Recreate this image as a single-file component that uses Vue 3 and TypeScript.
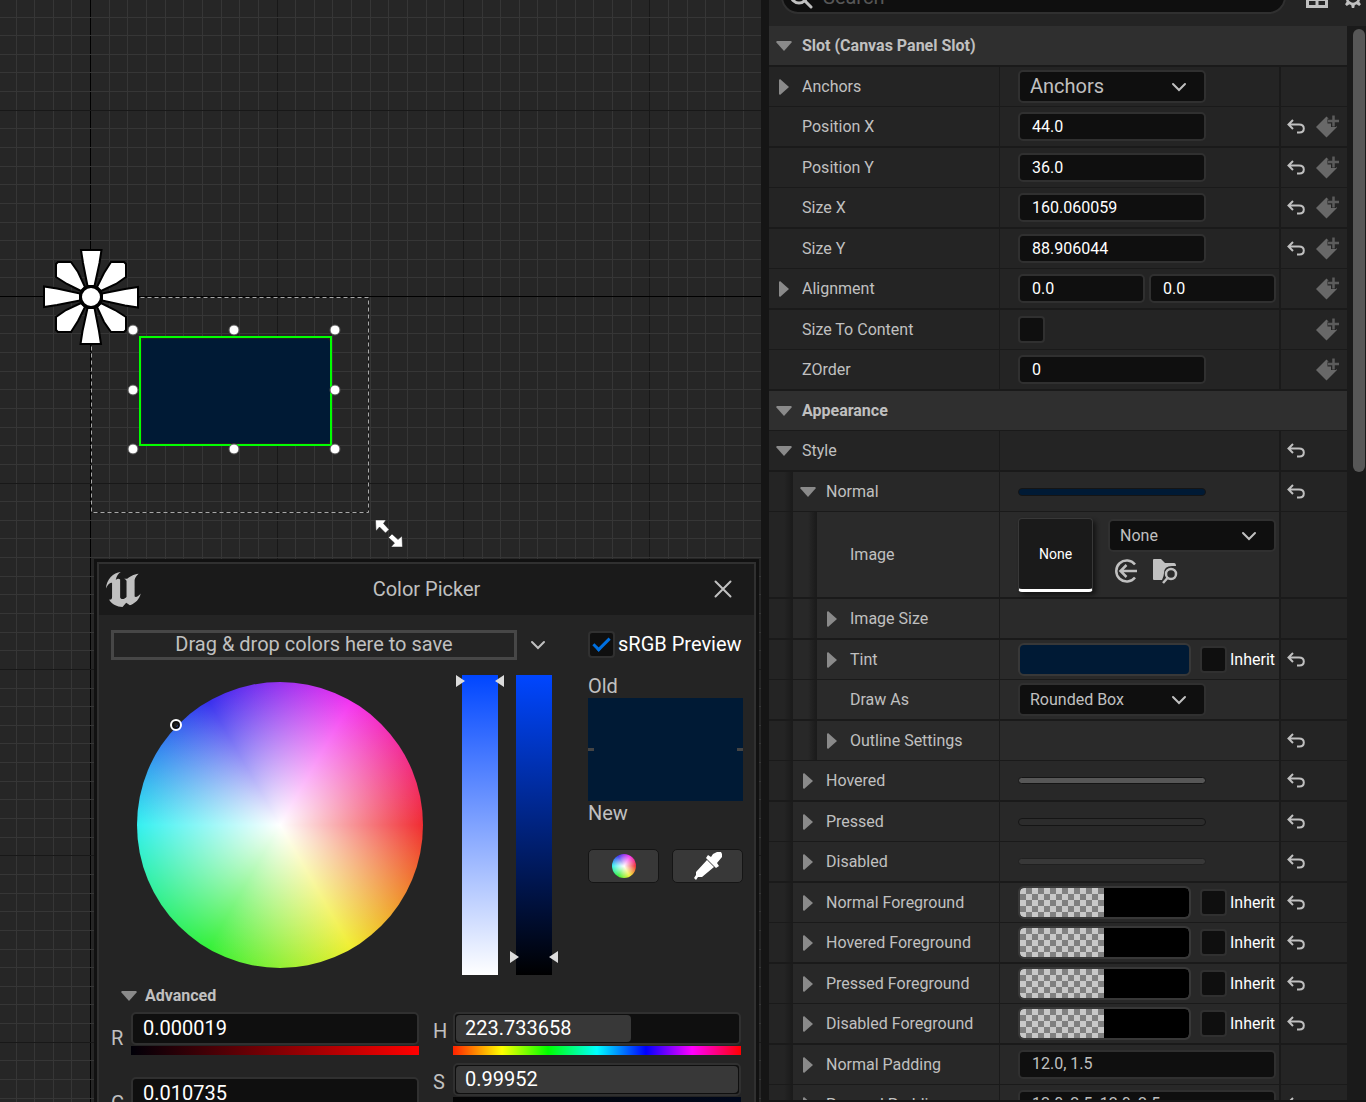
<script setup lang="ts">
import { ref } from 'vue'

type Kind = 'header' | 'none' | 'number' | 'pair' | 'toggle' | 'select' | 'bigselect' | 'brush' | 'image' | 'color' | 'text'

interface Row {
  label: string
  kind: Kind
  level?: number
  arrow?: 'open' | 'closed'
  values?: string[]
  tone?: string
  undo?: boolean
  bind?: boolean
}

const rows: Row[] = [
  { label: 'Slot (Canvas Panel Slot)', kind: 'header', arrow: 'open' },
  { label: 'Anchors', kind: 'bigselect', arrow: 'closed', values: ['Anchors'] },
  { label: 'Position X', kind: 'number', values: ['44.0'], undo: true, bind: true },
  { label: 'Position Y', kind: 'number', values: ['36.0'], undo: true, bind: true },
  { label: 'Size X', kind: 'number', values: ['160.060059'], undo: true, bind: true },
  { label: 'Size Y', kind: 'number', values: ['88.906044'], undo: true, bind: true },
  { label: 'Alignment', kind: 'pair', arrow: 'closed', values: ['0.0', '0.0'], bind: true },
  { label: 'Size To Content', kind: 'toggle', bind: true },
  { label: 'ZOrder', kind: 'number', values: ['0'], bind: true },
  { label: 'Appearance', kind: 'header', arrow: 'open' },
  { label: 'Style', kind: 'none', arrow: 'open', undo: true },
  { label: 'Normal', kind: 'brush', level: 1, arrow: 'open', tone: 'navy', undo: true },
  { label: 'Image', kind: 'image', level: 2, values: ['None'] },
  { label: 'Image Size', kind: 'none', level: 2, arrow: 'closed' },
  { label: 'Tint', kind: 'color', level: 2, arrow: 'closed', tone: 'navy', undo: true },
  { label: 'Draw As', kind: 'select', level: 2, values: ['Rounded Box'] },
  { label: 'Outline Settings', kind: 'none', level: 2, arrow: 'closed', undo: true },
  { label: 'Hovered', kind: 'brush', level: 1, arrow: 'closed', tone: 'light', undo: true },
  { label: 'Pressed', kind: 'brush', level: 1, arrow: 'closed', tone: 'dark', undo: true },
  { label: 'Disabled', kind: 'brush', level: 1, arrow: 'closed', tone: 'dim', undo: true },
  { label: 'Normal Foreground', kind: 'color', level: 1, arrow: 'closed', tone: 'alpha', undo: true },
  { label: 'Hovered Foreground', kind: 'color', level: 1, arrow: 'closed', tone: 'alpha', undo: true },
  { label: 'Pressed Foreground', kind: 'color', level: 1, arrow: 'closed', tone: 'alpha', undo: true },
  { label: 'Disabled Foreground', kind: 'color', level: 1, arrow: 'closed', tone: 'alpha', undo: true },
  { label: 'Normal Padding', kind: 'text', level: 1, arrow: 'closed', values: ['12.0, 1.5'] },
  { label: 'Pressed Padding', kind: 'text', level: 1, arrow: 'closed', values: ['12.0, 2.5, 12.0, 2.5'], undo: true },
]

// Separators alternate between one and two pixels down the list.
const isThick = (i: number): boolean => i % 2 === (i > 12 ? 1 : 0)

const srgb = ref(true)

// Design surface grid: a heavy line every tenth step, black through the origin.
const STEP = 18.64
const originX = 90
const originY = 296
interface GridLine { pos: number; tone: string }
function gridLines(origin: number, extent: number): GridLine[] {
  const out: GridLine[] = []
  for (let k = -Math.floor(origin / STEP); origin + k * STEP < extent; k++) {
    out.push({
      pos: Math.floor(origin + 0.6 + k * STEP),
      tone: k === 0 ? 'axis' : k % 10 === 0 ? 'major' : 'minor',
    })
  }
  const weight: Record<string, number> = { minor: 0, major: 1, axis: 2 }
  return out.sort((a, b) => weight[a.tone] - weight[b.tone])
}
const columns = gridLines(originX, 2600)
const lines = gridLines(originY, 1800)

const handles: [number, number][] = [
  [133, 330], [234, 330], [335, 330], [133, 390],
  [335, 390], [133, 449], [234, 449], [335, 449],
]

interface Channel { name: string; value: string; bar: string; fill?: number }
const rgb: Channel[] = [
  { name: 'R', value: '0.000019', bar: 'red' },
  { name: 'G', value: '0.010735', bar: 'green' },
]
const hsv: Channel[] = [
  { name: 'H', value: '223.733658', bar: 'hue', fill: 62 },
  { name: 'S', value: '0.99952', bar: 'sat', fill: 100 },
]
</script>

<template>
  <div class="editor">
    <main class="surface">
      <svg class="stage" aria-label="Design surface">
        <rect v-for="l in columns" :key="'c' + l.pos" :x="l.pos" y="0" width="1" height="100%" :class="l.tone" />
        <rect v-for="l in lines" :key="'l' + l.pos" x="0" :y="l.pos" width="100%" height="1" :class="l.tone" />
        <rect x="91.5" y="297.5" width="277" height="215" class="bounds-under" />
        <rect x="91.5" y="297.5" width="277" height="215" class="bounds" />
        <rect x="140" y="337" width="191" height="108" class="sel-bg" />
        <rect x="142" y="339" width="188" height="104" rx="4" fill="#001a35" />
        <rect x="140" y="337" width="191" height="108" class="sel" />
        <circle v-for="(h, i) in handles" :key="i" :cx="h[0]" :cy="h[1]" r="5" class="handle" />
        <g transform="translate(91 297)" class="flower">
          <g v-for="a in [0, 90, 180, 270]" :key="a" :transform="`rotate(${a})`">
            <path d="M-10 -47H10.500L8.500 -34L3.500 -11H-3.500L-8 -34Z" />
            <path d="M20 -35H33L35 -33V-20L25 -13L10 -6L6 -10L13 -24Z" />
          </g>
          <circle r="10.500" class="hub" />
        </g>
        <g fill="#fff" stroke="#222" stroke-width="0.500">
          <path d="M375.500 520H386L383.500 523.500L389 529.500L385.500 533L379.500 527L376 531Z" />
          <path d="M402.500 547H391L394.500 543L388.500 537.500L392 534L398 539.500L402 536Z" />
        </g>
      </svg>

      <section class="picker" aria-label="Color Picker">
        <header class="titlebar">
          <svg class="logo" viewBox="48 64 104 104" aria-hidden="true">
            <path fill="#c0c0c0" d="M92 64C70 66 49 86 48 113C54 99 62 93 66 97V138C66 145 62 147 57 146C65 160 81 168 97 168L108 155L119 163C136 157 148 144 151 128C144 136 138 140 133 137V88C134 80 140 74 145 69C130 70 118 78 111 84H102C108 87 110 89 109 95V138C104 145 91 147 90 139V86C86 83 81 84 77 88C79 76 85 68 92 64Z" />
          </svg>
          <h1>Color Picker</h1>
          <button class="plain close" aria-label="Close">
            <svg width="18" height="18" viewBox="0 0 18 18"><path d="M1.500 1.500L16.500 16.500M16.500 1.500L1.500 16.500" class="stroke" /></svg>
          </button>
        </header>

        <div class="body">
          <div class="mixer">
            <div class="mix-left">
              <div class="save-row">
                <div class="dropzone">Drag &amp; drop colors here to save</div>
                <button class="plain themes" aria-label="Color themes">
                  <svg width="16" height="10" viewBox="0 0 16 10"><path d="M2 2L8 8L14 2" class="stroke" /></svg>
                </button>
              </div>
              <div class="wheel-row">
                <div class="wheel-box">
                  <div class="wheel">
                    <span class="marker"></span>
                  </div>
                </div>
                <div class="slider">
                  <input type="range" min="0" max="100" value="100" class="ramp ramp-sat" aria-label="Saturation">
                  <svg class="marks top" width="50" height="14" viewBox="0 0 50 14"><path d="M1 1L10 7L1 13ZM49 1L40 7L49 13Z" /></svg>
                </div>
                <div class="slider">
                  <input type="range" min="0" max="100" value="6" class="ramp ramp-val" aria-label="Value">
                  <svg class="marks low" width="50" height="14" viewBox="0 0 50 14"><path d="M1 1L10 7L1 13ZM49 1L40 7L49 13Z" /></svg>
                </div>
              </div>
            </div>
            <div class="mix-right">
              <label class="srgb"><input v-model="srgb" type="checkbox" class="check"><span>sRGB Preview</span></label>
              <div class="cap old">Old</div>
              <div class="compare"><i></i><i></i></div>
              <div class="cap">New</div>
              <div class="tools">
                <button aria-label="Color wheel"><span class="mini-wheel"></span></button>
                <button aria-label="Eyedropper">
                  <svg width="30" height="28" viewBox="0 0 30 28">
                    <path fill="#fff" d="M20 2L24 0H28L29 2V5L24 11L26 14L23 16L13 6L15 3L18 5Z" />
                    <path fill="#fff" d="M14 8L21 15L9 25L5 25L3 28L1 26L3 23V20Z" />
                  </svg>
                </button>
              </div>
            </div>
          </div>

          <button class="plain advanced"><svg width="16" height="10" viewBox="0 0 16 10"><path d="M1 0H15L16 1L8 10L0 1Z" fill="#8a8a8a" /></svg>Advanced</button>

          <div class="channels">
            <div class="channel-col wide">
              <label v-for="c in rgb" :key="c.name" class="channel">
                <span class="ch-name">{{ c.name }}</span>
                <span class="ch-body">
                  <span class="ch-field"><input type="text" :value="c.value"></span>
                  <span class="bar" :class="c.bar"></span>
                </span>
              </label>
            </div>
            <div class="channel-col">
              <label v-for="c in hsv" :key="c.name" class="channel">
                <span class="ch-name">{{ c.name }}</span>
                <span class="ch-body">
                  <span class="ch-field"><span class="fill-track"><span class="fill" :style="{ width: c.fill + '%' }"></span></span><input type="text" :value="c.value"></span>
                  <span class="bar" :class="c.bar"></span>
                </span>
              </label>
            </div>
          </div>
        </div>
      </section>
    </main>

    <aside class="details">
      <div class="toolbar">
        <div class="search">
          <svg width="24" height="24" viewBox="0 0 24 24"><circle cx="10" cy="10" r="8" class="stroke thick-stroke" /><path d="M16 16L22 22" class="stroke thick-stroke" /></svg>
          <input type="text" placeholder="Search" aria-label="Search">
        </div>
        <button class="plain" aria-label="Property matrix">
          <svg width="22" height="20" viewBox="0 0 22 20"><path fill="#c0c0c0" fill-rule="evenodd" d="M0 1H22V20H0ZM3 4V9H9.500V4ZM12.500 4V9H19V4ZM3 13V17H9.500V13ZM12.500 13V17H19V13Z" /></svg>
        </button>
        <button class="plain gear" aria-label="Settings">
          <svg width="20" height="20" viewBox="-10 -10 20 20">
            <circle r="6" fill="none" stroke="#c0c0c0" stroke-width="2.500" />
            <circle r="2" fill="#c0c0c0" />
            <path v-for="a in [0, 45, 90, 135, 180, 225, 270, 315]" :key="a" d="M-2 -6L-1.200 -10H1.200L2 -6Z" fill="#c0c0c0" :transform="`rotate(${a})`" />
          </svg>
        </button>
      </div>

      <div class="scroll-area">
        <div class="grid">
          <div
            v-for="(r, i) in rows"
            :key="r.label"
            class="row"
            :class="['lv' + (r.level ?? 0), r.kind, { thick: isThick(i) }]"
          >
            <div class="name">
              <span v-for="n in r.level ?? 0" :key="n" class="well" :class="'well' + n"></span>
              <span class="twirl">
                <svg v-if="r.arrow === 'open'" width="16" height="10" viewBox="0 0 16 10"><path d="M1 0H15L16 1L8 10L0 1Z" fill="#8a8a8a" /></svg>
                <svg v-else-if="r.arrow === 'closed'" width="10" height="16" viewBox="0 0 10 16"><path d="M0 1L1 0L10 8L1 16L0 15Z" fill="#8a8a8a" /></svg>
              </span>
              <span class="label">{{ r.label }}</span>
            </div>

            <template v-if="r.kind !== 'header'">
              <div class="value">
                <template v-if="r.kind === 'number' || r.kind === 'pair' || r.kind === 'text'">
                  <input v-for="(v, k) in r.values" :key="k" type="text" class="field" :value="v" :aria-label="r.label">
                </template>

                <span v-else-if="r.kind === 'select' || r.kind === 'bigselect'" class="combo">
                  <select :aria-label="r.label"><option>{{ r.values?.[0] }}</option></select>
                  <svg width="16" height="10" viewBox="0 0 16 10"><path d="M2 2L8 8L14 2" class="stroke" /></svg>
                </span>

                <input v-else-if="r.kind === 'toggle'" type="checkbox" class="check" :aria-label="r.label">

                <span v-else-if="r.kind === 'brush'" class="brush-bar" :class="r.tone"></span>

                <template v-else-if="r.kind === 'color'">
                  <button class="swatch" :class="r.tone" :aria-label="r.label"></button>
                  <label class="inherit"><input type="checkbox" class="check"><span>Inherit</span></label>
                </template>

                <template v-else-if="r.kind === 'image'">
                  <div class="thumb">None</div>
                  <div class="asset">
                    <span class="combo">
                      <select aria-label="Image asset"><option>None</option></select>
                      <svg width="16" height="10" viewBox="0 0 16 10"><path d="M2 2L8 8L14 2" class="stroke" /></svg>
                    </span>
                    <div class="asset-tools">
                      <button class="plain" aria-label="Use selected asset">
                        <svg width="24" height="24" viewBox="0 0 24 24"><path d="M21 5.500A10.500 10.500 0 1 0 21 18.500M23 12H7M12.500 6L6.500 12L12.500 18" fill="none" stroke="#c0c0c0" stroke-width="2.500" /></svg>
                      </button>
                      <button class="plain" aria-label="Browse to asset">
                        <svg width="26" height="26" viewBox="0 0 26 26">
                          <path fill="#c0c0c0" d="M1 2Q1 1 2 1H9L13 5H22Q24 5 24 8H20Q12 8 12 15Q12 18 10 22H2Q1 22 1 21Z" />
                          <circle cx="19" cy="16" r="5" fill="none" stroke="#c0c0c0" stroke-width="2.500" />
                          <path d="M15.500 20L11 25" stroke="#c0c0c0" stroke-width="2.500" />
                        </svg>
                      </button>
                    </div>
                  </div>
                </template>
              </div>

              <div class="actions">
                <button v-if="r.undo" class="plain undo" :aria-label="'Reset ' + r.label">
                  <svg width="18" height="15" viewBox="0 0 18 15"><path d="M6 1L1.500 5.500L6 10M1.500 5.500H12C15.500 5.500 16.800 7.500 16.800 9.500C16.800 12 15 13.500 12.500 13.500H10" fill="none" stroke="#c0c0c0" stroke-width="2" /></svg>
                </button>
                <button v-if="r.bind" class="plain bind" :aria-label="'Keyframe ' + r.label">
                  <svg width="23" height="23" viewBox="0 0 23 23">
                    <path d="M0 12L10.500 1.500L21 12L10.500 22.500Z" fill="#686868" />
                    <path d="M17.500 0V12M11.500 6H23" stroke="#242424" stroke-width="5" />
                    <path d="M17.500 0.500V11.500M12 6H23" stroke="#5c5c5c" stroke-width="2.500" />
                  </svg>
                </button>
              </div>
            </template>
          </div>
        </div>
        <div class="scrollbar"><span></span></div>
      </div>
    </aside>
  </div>
</template>

<style>
body {
  margin: 0;
  background: #151515;
}
</style>

<style scoped>
* {
  box-sizing: border-box;
}
.editor {
  display: flex;
  height: 100vh;
  overflow: hidden;
  background: #151515;
  color: #c0c0c0;
  font-family: Roboto, "Liberation Sans", sans-serif;
  font-size: 16px;
  line-height: 20px;
}
input,
select,
button {
  font: inherit;
  color: inherit;
  margin: 0;
}
svg {
  display: block;
}
.plain {
  background: none;
  border: 0;
  padding: 0;
}
.stroke {
  fill: none;
  stroke: #c0c0c0;
  stroke-width: 2;
  stroke-linecap: round;
}
.thick-stroke {
  stroke-width: 3;
}

/* Design surface */
.surface {
  position: relative;
  flex: 1;
  min-width: 0;
  overflow: hidden;
  background: #262626;
}
.stage {
  width: 100%;
  height: 100%;
}
.minor { fill: #363636; }
.major { fill: #181818; }
.axis { fill: #000; }
.bounds-under {
  fill: none;
  stroke: #151515;
}
.bounds {
  fill: none;
  stroke: #a8a8a8;
  stroke-dasharray: 4 3;
}
.sel-bg { fill: #201c28; }
.sel {
  fill: none;
  stroke: #00ff00;
  stroke-width: 2;
}
.handle {
  fill: #fff;
  stroke: #555;
  stroke-width: 1;
}
.flower path {
  fill: #fff;
  stroke: #000;
  stroke-width: 2;
}
.flower .hub {
  fill: #fff;
  stroke: #000;
  stroke-width: 3;
}

/* Color picker window */
.picker {
  position: absolute;
  left: 97px;
  right: 5px;
  top: 562px;
  bottom: -60px;
  border: 2px solid #303030;
  box-shadow: 0 0 0 3px #111;
  background: #242424;
  font-size: 20px;
  line-height: 24px;
}
.titlebar {
  display: grid;
  grid-template-columns: 62px 1fr 62px;
  align-items: center;
  height: 51px;
  padding-bottom: 1px;
  background: #1a1a1a;
}
.logo {
  width: 35px;
  height: 35px;
  margin-left: 7px;
}
.titlebar h1 {
  margin: 0;
  font-size: 20px;
  font-weight: 400;
  text-align: center;
}
.close {
  justify-self: center;
}
.body {
  padding: 15px 11px 0 12px;
}
.mixer {
  display: flex;
  gap: 27px;
}
.mix-left {
  flex: 1;
}
.save-row {
  display: flex;
  height: 30px;
}
.dropzone {
  flex: 1;
  border: 3px solid #474747;
  text-align: center;
  line-height: 23px;
}
.themes {
  display: grid;
  place-items: center;
  width: 44px;
  padding-right: 2px;
}
.wheel-row {
  display: flex;
  gap: 18px;
  height: 300px;
  margin-top: 15px;
  padding-right: 9px;
}
.wheel-box {
  display: grid;
  place-items: center;
  flex: 1;
  padding-left: 5px;
}
.wheel {
  position: relative;
  width: 286px;
  height: 286px;
  border-radius: 50%;
  background:
    radial-gradient(circle closest-side, #fff 0%, rgba(255, 255, 255, 0) 100%),
    conic-gradient(from 90deg, #f02c32, #f0ee30 60deg, #34f038 120deg, #34f0f0 180deg, #3830ee 240deg, #f434f0 300deg, #f02c32);
}
.marker {
  position: absolute;
  left: 33px;
  top: 37px;
  width: 12px;
  height: 12px;
  border: 2px solid #fff;
  border-radius: 50%;
  box-shadow: inset 0 0 0 2px #111;
}
.slider {
  position: relative;
  width: 36px;
}
.ramp {
  appearance: none;
  display: block;
  writing-mode: vertical-lr;
  direction: rtl;
  width: 36px;
  height: 300px;
}
.ramp::-webkit-slider-thumb {
  appearance: none;
  width: 36px;
  height: 1px;
  background: transparent;
}
.ramp-sat { background: linear-gradient(#0046ff, #fff); }
.ramp-val { background: linear-gradient(#0046ff, #000); }
.marks {
  position: absolute;
  left: -7px;
  fill: #dcdcdc;
}
.marks.top { top: -1px; }
.marks.low { bottom: 11px; }
.mix-right {
  width: 155px;
}
.srgb {
  display: flex;
  align-items: center;
  gap: 3px;
  height: 28px;
  color: #fff;
  white-space: nowrap;
}
.check {
  appearance: none;
  display: grid;
  place-items: center;
  flex: none;
  width: 27px;
  height: 27px;
  border: 2px solid #303030;
  border-radius: 4px;
  background: #0f0f0f;
}
.check:checked::after {
  content: "";
  width: 14px;
  height: 6px;
  margin-top: -4px;
  border: solid #0070e0;
  border-width: 0 0 3px 3px;
  transform: rotate(-45deg);
}
.old {
  margin-top: 16px;
}
.compare {
  display: flex;
  justify-content: space-between;
  align-items: center;
  height: 103px;
  background: #001a35;
}
.compare i {
  width: 6px;
  height: 3px;
  background: #444;
}
.tools {
  display: flex;
  gap: 13px;
  margin-top: 24px;
}
.tools button {
  display: grid;
  place-items: center;
  flex: 1;
  height: 34px;
  padding: 0;
  border: 1px solid #151515;
  border-radius: 5px;
  background: #383838;
}
.mini-wheel {
  width: 24px;
  height: 24px;
  border-radius: 50%;
  background:
    radial-gradient(circle closest-side, #fff 0%, rgba(255, 255, 255, 0) 100%),
    conic-gradient(from 90deg, #f02c32, #f0ee30 60deg, #34f038 120deg, #34f0f0 180deg, #3830ee 240deg, #f434f0 300deg, #f02c32);
}
.advanced {
  display: flex;
  align-items: center;
  gap: 8px;
  margin: 11px 0 6px 10px;
  font-size: 16px;
  font-weight: 700;
  line-height: 20px;
}
.channels {
  display: grid;
  grid-template-columns: 1fr 1fr;
  gap: 14px;
  padding-right: 2px;
}
.channel-col {
  display: flex;
  flex-direction: column;
  gap: 8px;
}
.channel-col.wide {
  gap: 22px;
}
.channel {
  display: flex;
}
.ch-name {
  width: 20px;
  padding-top: 7px;
}
.wide .ch-name {
  padding-top: 14px;
}
.ch-body {
  flex: 1;
}
.ch-field {
  position: relative;
  display: block;
  height: 33px;
  border: 2px solid #303030;
  border-radius: 5px;
  background: #0f0f0f;
}
.ch-field input {
  position: relative;
  display: block;
  width: 100%;
  height: 28px;
  padding: 0 10px;
  border: 0;
  background: none;
  color: #fff;
}
.fill-track {
  position: absolute;
  inset: 1px;
}
.fill {
  display: block;
  height: 100%;
  border-radius: 4px;
  background: #383838;
}
.bar {
  display: block;
  height: 9px;
  margin-top: 1px;
}
.bar.red { background: linear-gradient(to right, #000008, #f00); }
.bar.green { background: linear-gradient(to right, #000008, #0f0); }
.bar.sat { background: linear-gradient(to right, #050505, #00081c); }
.bar.hue {
  background: linear-gradient(to right, #f20, #ff0 17%, #0f0 33%, #0ff 50%, #00f 67%, #f0f 83%, #f00);
}

/* Details panel */
.details {
  display: flex;
  flex-direction: column;
  flex: none;
  width: 605px;
  padding-left: 8px;
  padding-bottom: 2px;
  background: #151515;
}
.toolbar {
  display: flex;
  flex: none;
  align-items: flex-end;
  height: 26px;
  overflow: hidden;
  background: #242424;
}
.search {
  display: flex;
  align-items: center;
  flex: 1;
  height: 34px;
  margin: 0 20px 12px 12px;
  padding: 0 6px;
  border: 2px solid #303030;
  border-radius: 17px;
  background: #0f0f0f;
}
.search input {
  flex: 1;
  min-width: 0;
  height: 28px;
  padding: 0 10px;
  border: 0;
  background: none;
  font-size: 20px;
}
.search input::placeholder {
  color: #575757;
}
.toolbar .plain {
  margin-bottom: 18px;
}
.toolbar .gear {
  margin: 0 3px 18px 15px;
}
.scroll-area {
  display: flex;
  flex: 1;
  min-height: 0;
  background: #1a1a1a;
}
.grid {
  flex: 1;
  min-width: 0;
  overflow: hidden;
}
.scrollbar {
  width: 19px;
  padding: 3px 1px 0 6px;
}
.scrollbar span {
  display: block;
  height: 443px;
  border-radius: 6px;
  background: #575757;
}
.row {
  display: grid;
  grid-template-columns: 231px 1fr 66px;
  height: 40px;
  border-bottom: 1px solid #1a1a1a;
  background: #242424;
}
.row.thick {
  height: 41px;
  border-bottom-width: 2px;
}
.row.image {
  height: 87px;
}
.row.header {
  display: block;
  background: #2f2f2f;
  font-weight: 700;
}
.row.header .name {
  height: 100%;
  border-right: 0;
}
.name {
  display: flex;
  align-items: center;
  border-right: 1px solid #1a1a1a;
  white-space: nowrap;
}
.well {
  align-self: stretch;
  width: 24px;
}
.well1 { background: linear-gradient(to right, #242424 15px, #1b1b1b 23px); }
.well2 { background: linear-gradient(to right, #282828 15px, #1b1b1b 23px); }
.lv1 .name,
.lv1 .value { background: #282828; }
.lv2 .name,
.lv2 .value { background: #2a2a2a; }
.twirl {
  display: grid;
  place-items: center;
  width: 30px;
  margin-right: 3px;
}
.value {
  display: flex;
  align-items: center;
  gap: 4px;
  min-width: 0;
  padding-left: 18px;
  border-right: 2px solid #1a1a1a;
}
.field {
  width: 188px;
  height: 29px;
  padding: 0 12px;
  border: 2px solid #303030;
  border-radius: 5px;
  background: #0f0f0f;
  color: #fff;
}
.pair .field {
  width: 127px;
}
.text .field {
  width: 258px;
  padding-bottom: 2px;
  color: #c0c0c0;
}
.combo {
  position: relative;
  display: block;
  width: 188px;
}
.combo select {
  appearance: none;
  display: block;
  width: 100%;
  height: 33px;
  padding: 0 10px;
  border: 2px solid #303030;
  border-radius: 5px;
  background: #0f0f0f;
}
.combo svg {
  position: absolute;
  right: 19px;
  top: 12px;
  pointer-events: none;
}
.bigselect select {
  padding-bottom: 2px;
  font-size: 20px;
}
.brush-bar {
  width: 188px;
  height: 8px;
  border: 1px solid #151515;
  border-radius: 4px;
}
.brush-bar.navy { background: #001a35; }
.brush-bar.light { background: #575757; height: 7px; }
.brush-bar.dark { background: #2c2c2c; }
.brush-bar.dim { background: #383838; height: 7px; border-color: #202020; }
.swatch {
  width: 173px;
  height: 33px;
  border: 2px solid #383838;
  border-radius: 6px;
}
.swatch.navy {
  background: #001a35;
}
.swatch.alpha {
  background:
    linear-gradient(to right, transparent 50%, #000 50%) padding-box,
    repeating-conic-gradient(#808080 0 25%, #c8c8c8 0 50%) 0 0 / 12px 12px padding-box;
}
.inherit {
  display: flex;
  align-items: center;
  gap: 3px;
  margin-left: 5px;
  color: #fff;
}
.thumb {
  display: grid;
  place-items: center;
  width: 75px;
  height: 74px;
  border: 1px solid #383838;
  border-bottom: 3px solid #fff;
  border-radius: 4px;
  background: #1a1a1a;
  box-shadow: 3px 3px 4px #151515;
  color: #fff;
  font-size: 14px;
}
.asset {
  margin-left: 11px;
}
.asset .combo {
  width: 168px;
}
.asset-tools {
  display: flex;
  align-items: center;
  gap: 14px;
  height: 38px;
  padding-left: 6px;
}
.actions {
  display: grid;
  grid-template-columns: 29px 1fr;
  align-items: center;
  padding-left: 6px;
}
.bind {
  grid-column: 2;
}
</style>
